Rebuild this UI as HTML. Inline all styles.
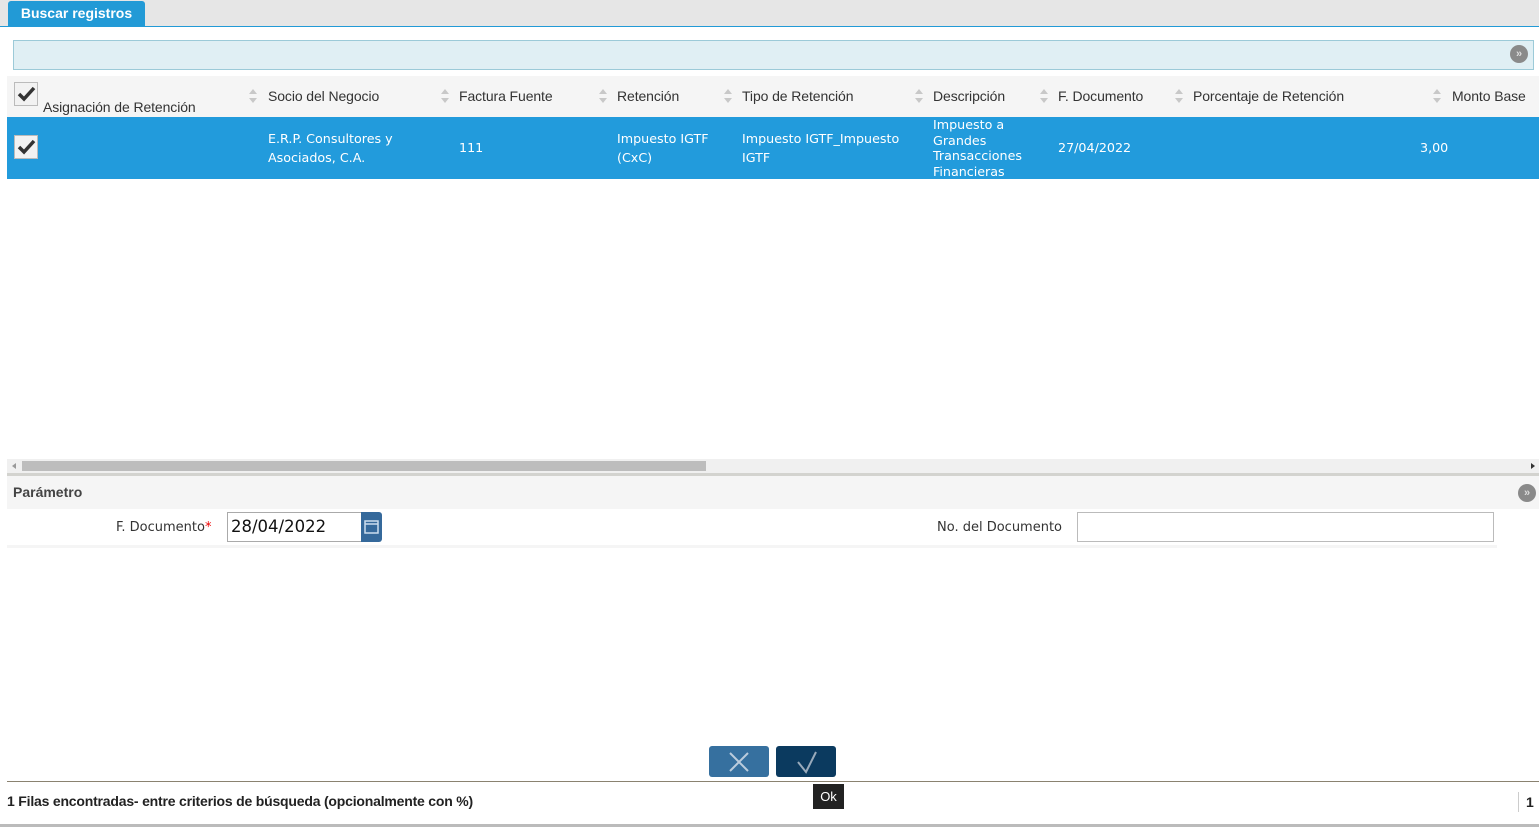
<!DOCTYPE html><html><head><meta charset="utf-8"><style>
body{margin:0;width:1539px;height:827px;position:relative;overflow:hidden;background:#fff;font-family:"Liberation Sans",sans-serif;color:#333}
.a{position:absolute}
.hd{font-size:14px;color:#333;letter-spacing:-0.1px}
.sort{position:absolute;width:8px;height:14px}
.sort:before,.sort:after{content:"";position:absolute;left:0;border-left:4px solid transparent;border-right:4px solid transparent}
.sort:before{top:0;border-bottom:5px solid #c8c8c8}
.sort:after{bottom:0;border-top:5px solid #c8c8c8}
.rw{color:#fff;font-family:"DejaVu Sans","Liberation Sans",sans-serif;font-size:12.7px;line-height:19px}
.cb{position:absolute;width:22px;height:22px;background:#f2f2f2;border:1px solid #bbb}
.circ{position:absolute;width:18px;height:18px;border-radius:50%;background:#8a8a8a;color:#ddd;font-size:11px;text-align:center;line-height:18px;font-weight:bold}
</style></head><body>
<div class="a" style="left:0;top:0;width:1539px;height:26px;background:#e6e6e6"></div>
<div class="a" style="left:0;top:26px;width:1539px;height:1px;background:#229ad6"></div>
<div class="a" style="left:8px;top:1px;width:137px;height:26px;background:#229ad6;border-radius:3px 3px 0 0;color:#fff;font-weight:bold;font-size:14px;line-height:24px;text-align:center">Buscar registros</div>
<div class="a" style="left:13px;top:40px;width:1519px;height:28px;background:#e0eff4;border:1px solid #9ccad8"></div>
<div class="circ" style="left:1510px;top:45px">»</div>
<div class="a" style="left:7px;top:76px;width:1532px;height:41px;background:#f5f5f5"></div>
<div class="cb" style="left:14px;top:82px"><svg width="22" height="22"><path d="M4 11l5 5 10-11" stroke="#333" stroke-width="3.5" fill="none"/></svg></div>
<div class="a hd" style="left:43px;top:99px">Asignación de Retención</div>
<div class="sort" style="left:249px;top:89px"></div><div class="a hd" style="left:268px;top:88px">Socio del Negocio</div>
<div class="sort" style="left:441px;top:89px"></div><div class="a hd" style="left:459px;top:88px">Factura Fuente</div>
<div class="sort" style="left:599px;top:89px"></div><div class="a hd" style="left:617px;top:88px">Retención</div>
<div class="sort" style="left:724px;top:89px"></div><div class="a hd" style="left:742px;top:88px">Tipo de Retención</div>
<div class="sort" style="left:915px;top:89px"></div><div class="a hd" style="left:933px;top:88px">Descripción</div>
<div class="sort" style="left:1040px;top:89px"></div><div class="a hd" style="left:1058px;top:88px">F. Documento</div>
<div class="sort" style="left:1175px;top:89px"></div><div class="a hd" style="left:1193px;top:88px">Porcentaje de Retención</div>
<div class="sort" style="left:1433px;top:89px"></div><div class="a hd" style="left:1452px;top:88px">Monto Base</div>
<div class="a" style="left:7px;top:117px;width:1532px;height:62px;background:#229bdc"></div>
<div class="cb" style="left:14px;top:135px"><svg width="22" height="22"><path d="M4 11l5 5 10-11" stroke="#333" stroke-width="3.5" fill="none"/></svg></div>
<div class="a rw" style="left:268px;top:129px">E.R.P. Consultores y<br>Asociados, C.A.</div>
<div class="a rw" style="left:459px;top:138px">111</div>
<div class="a rw" style="left:617px;top:129px">Impuesto IGTF<br>(CxC)</div>
<div class="a rw" style="left:742px;top:129px">Impuesto IGTF_Impuesto<br>IGTF</div>
<div class="a rw" style="left:933px;top:117px;line-height:15.5px">Impuesto a<br>Grandes<br>Transacciones<br>Financieras</div>
<div class="a rw" style="left:1058px;top:138px">27/04/2022</div>
<div class="a rw" style="left:1420px;top:138px">3,00</div>
<div class="a" style="left:7px;top:459px;width:1532px;height:14px;background:#f0f0f0"></div>
<div class="a" style="left:12px;top:463px;width:0;height:0;border-top:3px solid transparent;border-bottom:3px solid transparent;border-right:4px solid #999"></div>
<div class="a" style="left:1531px;top:463px;width:0;height:0;border-top:3px solid transparent;border-bottom:3px solid transparent;border-left:4px solid #333"></div>
<div class="a" style="left:22px;top:461px;width:684px;height:10px;background:#bdbdbd"></div>
<div class="a" style="left:7px;top:473px;width:1532px;height:3px;background:#d3d3cf"></div>
<div class="a" style="left:7px;top:476px;width:1532px;height:33px;background:#f5f5f5"></div>
<div class="a" style="left:13px;top:484px;font-weight:bold;font-size:14px;color:#444">Parámetro</div>
<div class="circ" style="left:1518px;top:484px">»</div>
<div class="a" style="left:7px;top:545px;width:1490px;height:3px;background:#f5f5f5"></div>
<div class="a" style="left:116px;top:520px;font-family:'DejaVu Sans',sans-serif;font-size:13px">F. Documento<span style="color:#e00">*</span></div>
<div class="a" style="left:227px;top:512px;width:134px;height:28px;border:1px solid #aaa"></div>
<div class="a" style="left:231px;top:517px;font-size:16.5px;color:#111;font-family:'DejaVu Sans',sans-serif">28/04/2022</div>
<div class="a" style="left:361px;top:512px;width:21px;height:30px;background:#35699b;border-radius:0 3px 3px 0"><svg width="21" height="30"><rect x="4" y="9" width="13" height="12" fill="none" stroke="#cde" stroke-width="1.5"/><line x1="4" y1="12" x2="17" y2="12" stroke="#cde" stroke-width="1.5"/></svg></div>
<div class="a" style="left:937px;top:520px;font-family:'DejaVu Sans',sans-serif;font-size:13px">No. del Documento</div>
<div class="a" style="left:1077px;top:512px;width:415px;height:28px;border:1px solid #bbb"></div>
<div class="a" style="left:709px;top:746px;width:60px;height:31px;background:#36709f;border-radius:3px"><svg width="60" height="31"><path d="M21 7l18 18M39 7L21 25" stroke="#bcd" stroke-width="2"/></svg></div>
<div class="a" style="left:776px;top:746px;width:60px;height:31px;background:#0b3a5f;border-radius:3px"><svg width="60" height="31"><path d="M22 16l8 10 10-20" stroke="#9ab" stroke-width="2" fill="none"/></svg></div>
<div class="a" style="left:7px;top:781px;width:1532px;height:1px;background:#8a8270"></div>
<div class="a" style="left:813px;top:784px;width:31px;height:25px;background:#222;color:#fff;font-size:13px;line-height:25px;text-align:center">Ok</div>
<div class="a" style="left:7px;top:793px;font-weight:bold;font-size:14px;color:#222;letter-spacing:-0.2px">1 Filas encontradas- entre criterios de búsqueda (opcionalmente con %)</div>
<div class="a" style="left:1518px;top:792px;width:1px;height:20px;background:#ccc"></div>
<div class="a" style="left:1526px;top:794px;font-weight:bold;font-size:14px;color:#222">1</div>
<div class="a" style="left:0;top:824px;width:1539px;height:3px;background:#bbb"></div>
</body></html>
